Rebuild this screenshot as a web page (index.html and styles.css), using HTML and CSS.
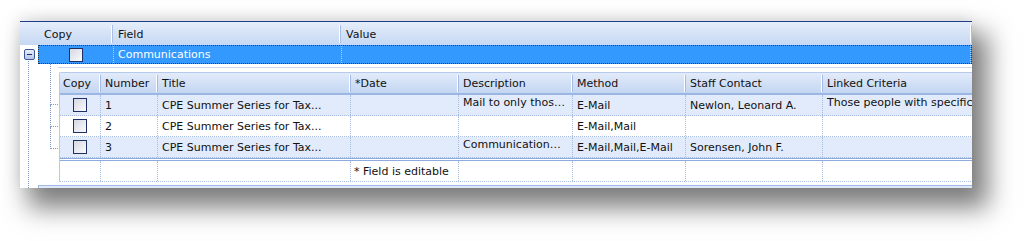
FILE: index.html
```
<!DOCTYPE html>
<html>
<head>
  <meta charset="UTF-8">
  <link rel="stylesheet" href="styles.css">
  <title>Communications</title>
</head>
<body>
  <div class="stage">
    <div class="panel">
      <div class="head">
        <div class="hcell copy-h">Copy</div>
        <div class="hcell">Field</div>
        <div class="hcell">Value</div>
      </div>

      <div class="group">
        <div class="expander"><span class="minus"></span></div>
        <div class="group-row">
          <div class="gcell center"><span class="check"></span></div>
          <div class="gcell">Communications</div>
          <div class="gcell"></div>
        </div>
      </div>

      <div class="detail">
        <div class="tree">
          <div class="branch">
            <div class="twig top"></div>
            <div class="twig"></div>
            <div class="twig"></div>
          </div>
        </div>

        <div class="sub">
          <div class="sub-head">
            <div class="sh">Copy</div>
            <div class="sh">Number</div>
            <div class="sh">Title</div>
            <div class="sh">*Date</div>
            <div class="sh">Description</div>
            <div class="sh">Method</div>
            <div class="sh">Staff Contact</div>
            <div class="sh">Linked Criteria</div>
          </div>

          <div class="sub-row alt">
            <div class="sc center"><span class="check"></span></div>
            <div class="sc">1</div>
            <div class="sc">CPE Summer Series for Tax...</div>
            <div class="sc"></div>
            <div class="sc up">Mail to only thos…</div>
            <div class="sc">E-Mail</div>
            <div class="sc">Newlon, Leonard A.</div>
            <div class="sc up">Those people with specific</div>
          </div>
          <div class="sub-row">
            <div class="sc center"><span class="check"></span></div>
            <div class="sc">2</div>
            <div class="sc">CPE Summer Series for Tax...</div>
            <div class="sc"></div>
            <div class="sc"></div>
            <div class="sc">E-Mail,Mail</div>
            <div class="sc"></div>
            <div class="sc"></div>
          </div>
          <div class="sub-row alt">
            <div class="sc center"><span class="check"></span></div>
            <div class="sc">3</div>
            <div class="sc">CPE Summer Series for Tax...</div>
            <div class="sc"></div>
            <div class="sc up">Communication…</div>
            <div class="sc">E-Mail,Mail,E-Mail</div>
            <div class="sc">Sorensen, John F.</div>
            <div class="sc"></div>
          </div>

          <div class="sub-foot">
            <div class="fc"></div>
            <div class="fc"></div>
            <div class="fc"></div>
            <div class="fc">* Field is editable</div>
            <div class="fc"></div>
            <div class="fc"></div>
            <div class="fc"></div>
            <div class="fc"></div>
          </div>
        </div>
      </div>

      <div class="bottom-bar"></div>
    </div>
  </div>
</body>
</html>
```

FILE: styles.css
```
html,
body {
  height: 100%;
}

body {
  margin: 0;
  background: #fff;
  font-family: "DejaVu Sans", Verdana, sans-serif;
  font-size: 11px;
  color: #111;
}

.stage {
  padding: 21px 0 50px 20px;
}

.panel {
  width: 952px;
  height: 166px;
  display: flex;
  flex-direction: column;
  background: #fff;
  border-top: 1px solid #1f3d8a;
  box-shadow: 12px 16px 24px 4px rgba(0, 0, 0, 0.5), -2px -4px 14px rgba(0, 0, 0, 0.08);
  overflow: hidden;
}

/* top header */
.head {
  display: grid;
  grid-template-columns: 93px 228px 1fr;
  height: 23px;
  flex: none;
  background: linear-gradient(#e4edfb, #c6d8f3);
}

.hcell {
  display: flex;
  align-items: center;
  padding-left: 5px;
  border-right: 1px solid #a9bfe4;
  box-shadow: inset -2px 0 0 -1px #fff;
  margin: 3px 0 2px;
}

.copy-h {
  padding-left: 24px;
}

/* group row */
.group {
  display: flex;
  height: 19px;
  flex: none;
}

.expander {
  width: 18px;
  display: flex;
  align-items: center;
  justify-content: center;
}

.minus {
  width: 9px;
  height: 9px;
  border: 1px solid #3c5a9a;
  border-radius: 2px;
  background: linear-gradient(#e9eefa, #b6c6e6);
  position: relative;
}

.minus:after {
  content: "";
  position: absolute;
  left: 2px;
  top: 4px;
  width: 5px;
  height: 1px;
  background: #1d2f66;
}

.group-row {
  flex: 1;
  display: grid;
  grid-template-columns: 75px 228px 1fr;
  background: #3399ff;
  border: 1px dotted #333;
  color: #fff;
}

.gcell {
  display: flex;
  align-items: center;
  padding-left: 4px;
  border-right: 1px dotted #a8d0ff;
}

.center {
  justify-content: center;
  padding-left: 0;
}

.check {
  display: block;
  width: 12px;
  height: 12px;
  border: 1px solid #1f2f63;
  background: linear-gradient(135deg, #d4d8e2, #fafbfd);
}

/* nested detail */
.detail {
  display: flex;
  flex: none;
  height: 110px;
  padding-top: 8px;
  background: linear-gradient(#fff 3px, #ccdaf1 3px, #ccdaf1 4px, #fff 4px) no-repeat 38px 0 / 100% 4px;
}

.tree {
  width: 30px;
  flex: none;
  margin: -11px 0 0 8px;
  padding-top: 3px;
  height: 130px;
  border-left: 1px dotted #7f9acb;
}

.branch {
  margin-left: 21px;
  width: 9px;
}

.twig {
  height: 21px;
  border-left: 1px dotted #7f9acb;
  border-bottom: 1px dotted #7f9acb;
  margin-right: -1px;
}

.twig.top {
  height: 40px;
}

.sub {
  width: 963px;
  flex: none;
  border-left: 1px solid #b7c9ea;
  border-top: 1px solid #b7c9ea;
  border-radius: 2px 0 0 0;
}

.sub-head,
.sub-row,
.sub-foot {
  display: grid;
  grid-template-columns: 41px 57px 193px 108px 114px 113px 137px 200px;
}

.sub-head {
  height: 20px;
  background: linear-gradient(#e2ebfa, #c4d6f2);
  border-bottom: 2px solid #9bb6e3;
}

.sh {
  display: flex;
  align-items: center;
  padding-left: 4px;
  border-right: 1px solid #a3bbe4;
  box-shadow: inset -2px 0 0 -1px #fff;
  margin: 2px 0 1px;
}

.sh:first-child {
  padding-left: 3px;
}

.sub-row {
  height: 20px;
  border-bottom: 1px dotted #a9bde0;
}

.sub-row.alt {
  background: #e1ebfb;
}

.sc {
  display: flex;
  align-items: center;
  padding-left: 4px;
  border-right: 1px dotted #a9bde0;
  white-space: nowrap;
  overflow: hidden;
}

.sc.up {
  align-items: flex-start;
  padding-top: 1px;
}

.sc.center {
  padding-left: 0;
}

.sub-foot {
  height: 20px;
  border-top: 3px double #8eabdf;
  border-bottom: 1px dotted #a9bde0;
}

.fc {
  display: flex;
  align-items: center;
  padding-left: 3px;
  border-right: 1px dotted #a9bde0;
  white-space: nowrap;
}

.bottom-bar {
  flex: none;
  margin: 3px 0 0 18px;
  height: 2px;
  border-top: 1px solid #9fb8e4;
  border-bottom: 1px solid #c3d3ef;
  background: #dfe8f8;
  border-left: 1px solid #9fb8e4;
}
```
